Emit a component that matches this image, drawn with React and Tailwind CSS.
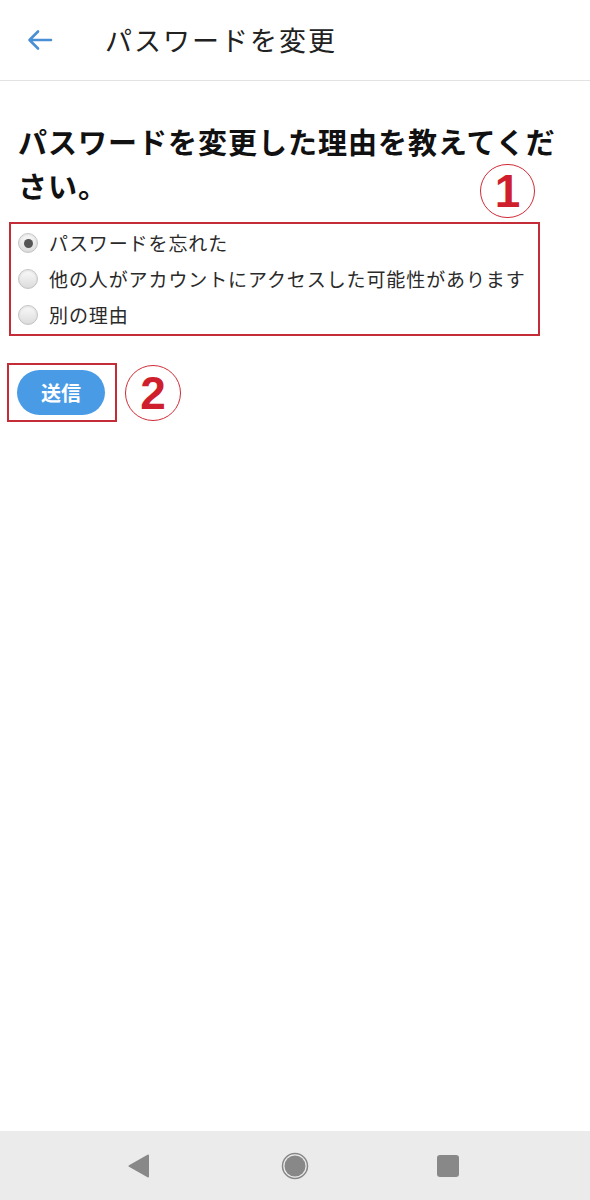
import React from 'react';

const jp = { fontFamily: '"Noto Sans CJK JP", "Noto Sans", sans-serif' };

function Radio({ checked }) {
    return (
        <span className="relative flex items-center justify-center w-[20px] h-[20px] rounded-full border border-[#c4c4c4] bg-gradient-to-b from-[#fafafa] to-[#dcdcdc] shadow-[inset_0_1px_2px_rgba(0,0,0,0.1)]">
            {checked && <span className="w-[9px] h-[9px] rounded-full bg-[#555]" />}
        </span>
    );
}

function Circled({ n, className }) {
    return (
        <div className={"flex items-center justify-center rounded-full border-[1.5px] border-[#cf2b36] text-[#d01f2c] font-bold leading-none " + className}
            style={{ fontFamily: '"Liberation Sans", Arial, sans-serif' }}>
            {n}
        </div>
    );
}

export default function App() {
    const reasons = [
        'パスワードを忘れた',
        '他の人がアカウントにアクセスした可能性があります',
        '別の理由',
    ];
    return (
        <div className="min-h-[1200px] flex flex-col bg-white text-[#222]" style={jp}>
            <header className="flex items-center h-[81px] border-b border-[#e2e2e2]">
                <div className="w-[105px] flex items-center pl-[27px]">
                    <svg width="26" height="22" viewBox="0 0 26 22" fill="none" stroke="#4a8fd6" strokeWidth="2.6" strokeLinecap="round" strokeLinejoin="round">
                        <path d="M24 11H3M11 2.5L2.5 11L11 19.5" />
                    </svg>
                </div>
                <h1 className="text-[27px] font-normal text-[#212121] tracking-[2px]">パスワードを変更</h1>
            </header>

            <main className="relative px-[18px]">
                <h2 className="mt-[38px] w-[556px] text-[29px] leading-[44px] font-bold text-[#111] tracking-[1px]">
                    パスワードを変更した理由を教えてください。
                </h2>
                <Circled n="1" className="absolute left-[480px] top-[83px] w-[55px] h-[54px] text-[46px]" />

                <div className="mt-[15px] -ml-[9px] w-[531px] border-[2.5px] border-[#c42d38] pt-[1px] pb-[1px]">
                    {reasons.map((r, i) => (
                        <label key={r} className="flex items-center h-[36px] pl-[7px] gap-[11px]">
                            <Radio checked={i === 0} />
                            <span className="text-[19px] text-[#2a2a2a] tracking-[0.9px]">{r}</span>
                        </label>
                    ))}
                </div>

                <div className="mt-[27px] -ml-[11px] flex items-center gap-[8px]">
                    <div className="border-[2.5px] border-[#c42d38] pl-[8px] pr-[10px] py-[5px]">
                        <button className="w-[88px] h-[45px] rounded-full bg-[#4a9be6] text-white text-[20px] font-bold">
                            送信
                        </button>
                    </div>
                    <Circled n="2" className="w-[56px] h-[56px] text-[46px]" />
                </div>
            </main>

            <div className="flex-1" />

            <nav className="h-[69px] bg-[#ebebeb] flex items-center">
                <div className="flex-1 flex justify-end">
                    <svg width="22" height="24" viewBox="0 0 22 24" className="mr-[81px]">
                        <path d="M20 1.5L1.5 12L20 22.5Z" fill="#888" stroke="#888" strokeWidth="2" strokeLinejoin="round" />
                    </svg>
                </div>
                <svg width="28" height="28" viewBox="0 0 28 28" className="mx-[50px]">
                    <circle cx="14" cy="14" r="12.5" fill="none" stroke="#888" strokeWidth="1.5" />
                    <circle cx="14" cy="14" r="10.5" fill="#888" />
                </svg>
                <div className="flex-1 flex justify-start">
                    <div className="ml-[78px] w-[22px] h-[22px] rounded-[3px] bg-[#888]" />
                </div>
            </nav>
        </div>
    );
}
